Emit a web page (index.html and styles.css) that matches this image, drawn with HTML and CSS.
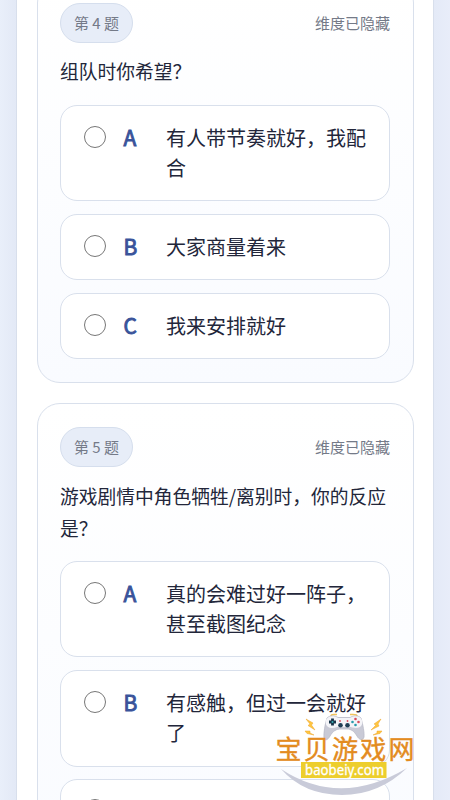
FILE: index.html
```html
<!DOCTYPE html>
<html lang="zh-CN">
<head>
<meta charset="utf-8">
<title>游戏测试</title>
<link rel="stylesheet" href="styles.css">
</head>
<body>
<main class="panel">
  <section class="card card-first">
    <header class="head"><span class="pill">第 4 题</span><span class="meta">维度已隐藏</span></header>
    <h2 class="title">组队时你希望？</h2>
    <div class="options">
      <label class="option"><input type="radio" name="q4" class="radio"><b class="key">A</b><span class="text">有人带节奏就好，我配合</span></label>
      <label class="option"><input type="radio" name="q4" class="radio"><b class="key">B</b><span class="text">大家商量着来</span></label>
      <label class="option"><input type="radio" name="q4" class="radio"><b class="key">C</b><span class="text">我来安排就好</span></label>
    </div>
  </section>
  <section class="card">
    <header class="head"><span class="pill">第 5 题</span><span class="meta">维度已隐藏</span></header>
    <h2 class="title title-long">游戏剧情中角色牺牲/离别时，你的反应是？</h2>
    <div class="options">
      <label class="option"><input type="radio" name="q5" class="radio"><b class="key">A</b><span class="text">真的会难过好一阵子，甚至截图纪念</span></label>
      <label class="option"><input type="radio" name="q5" class="radio"><b class="key">B</b><span class="text">有感触，但过一会就好了</span></label>
      <label class="option"><input type="radio" name="q5" class="radio radio-last"></label>
    </div>
  </section>
</main>
<svg class="mark" width="150" height="100" viewBox="270 700 150 100" role="img">
  <path d="M281 769Q340 808 407 768Q379 795 342 795Q304 795 281 769Z" fill="#c9cbd9"/>
  <path d="M331 716Q331 714.500 334 714.500H337M350 714.500H353Q357 714.500 357 716" fill="none" stroke="#f3c45a" stroke-width="1.5"/>
  <path d="M327 718C330 715 335 715.500 338 717.500H350C353 715.500 358 715 361 718C363 725 364.500 733 364 737C363 741 359 740 357 736C354 731 351 729 347 729H341C336 729 333 731 330 736C328 740 325 741 324 738C323.500 733 325 724 327 718Z" fill="#c9cad6" stroke="#b9bac8" stroke-width=".8"/>
  <path d="M328 717.500C331 715.500 335 716 338 718H350C353 716 357 715.500 360 717.500C363 720 363 725 360 727C357 728.500 353 728 351 727H337C334 728.500 330 728.500 327.500 726.500C325 724 325 720 328 717.500Z" fill="#f4f4f8"/>
  <path d="M332.500 718.500V725.500M329 722H336" stroke="#183449" stroke-width="2.800"/>
  <circle cx="332.500" cy="722" r="1" fill="#35aeb5"/>
  <g fill="#203e55"><circle cx="340.500" cy="725.300" r="2.300"/><circle cx="347.500" cy="725.300" r="2.300"/></g>
  <g fill="#d94c5c"><circle cx="355.500" cy="719" r="1.300"/><circle cx="358.500" cy="722" r="1.300"/><circle cx="340" cy="721" r=".9"/><circle cx="347.500" cy="721" r=".9"/></g>
  <g fill="#279cab"><circle cx="352.500" cy="722" r="1.300"/><circle cx="355.500" cy="725" r="1.300"/></g>
  <path d="M306 719L313 723L311.500 725L315 730L308 725.500L310 724ZM305 731L310 731L310 733L314 735L307 733.500ZM381 719L374 724L376 725L371 730L379 726L378 724ZM382 731L377 731L377 733L373 735L380 733.500Z" fill="#ffc63f" stroke="#eca52d" stroke-width=".5"/>
  <text class="brand" x="275.500" y="759" textLength="139" lengthAdjust="spacing">宝贝游戏网</text>
  <rect x="301" y="762" width="85.500" height="16" fill="#edce2d"/>
  <text class="domain" x="305" y="774.500" textLength="79" lengthAdjust="spacingAndGlyphs">baobeiy.com</text>
</svg>
</body>
</html>
```
FILE: styles.css
```css
* { box-sizing: border-box; }
html { height: 100%; overflow: hidden; }
body {
  margin: 0;
  height: 800px;
  overflow: hidden;
  padding: 0 16px;
  background: linear-gradient(90deg, #e9effa 0, #e3e9f6 16px, #e4eaf7 434px, #e8edf9 450px);
  color: #22263a;
  font-family: "Noto Sans CJK SC", sans-serif;
}
.panel {
  height: 800px;
  overflow: hidden;
  padding: 0 19.500px;
  background: #fff;
  border: solid #d8dfec;
  border-width: 0 1px;
}
.card {
  border: 1px solid #d9e0ec;
  border-radius: 23px;
  padding: 22.500px;
  background: linear-gradient(180deg, #fff, #f9fbff);
  margin-bottom: 20.500px;
}
.card-first { margin-top: -20.500px; }
.head { display: flex; justify-content: space-between; align-items: center; height: 40px; }
.pill {
  height: 40px;
  width: 73px;
  border: 1px solid #d5deed;
  border-radius: 20px;
  background: #e7edf8;
  text-align: center;
  line-height: 37px;
}
.pill, .meta { color: #747a88; font-size: 15px; }
.card-first .meta { padding-bottom: 1px; }
.title { margin: 12px 0 17.500px; font-size: 18.750px; line-height: 32px; font-weight: 400; }
.title-long { margin: 13.200px 0 16.800px; }
.options { display: grid; gap: 12.700px; }
.option {
  display: grid;
  grid-template-columns: 22px 26px 1fr;
  column-gap: 17px;
  align-items: start;
  min-height: 66.500px;
  padding: 17.250px 22px 17.250px 23px;
  border: 1px solid #d9e0ec;
  border-radius: 17px;
  background: #fff;
}
.radio {
  appearance: none;
  width: 22px;
  height: 22px;
  margin: 3px 0 0;
  border: 1.500px solid #777;
  border-radius: 50%;
  background: #fff;
}
.radio-last { margin-top: 2px; }
.key {
  font-size: 21px;
  line-height: 29px;
  font-weight: 400;
  color: #39539a;
  -webkit-text-stroke: .9px #39539a;
  padding-left: .5px;
}
.text { font-size: 20px; line-height: 30px; }
.mark { position: absolute; left: 270px; top: 700px; }
.brand { font-size: 26px; font-weight: 400; fill: #e38b20; stroke: #e38b20; stroke-width: .4px; }
.domain { font-size: 14px; font-family: "Noto Sans", sans-serif; fill: #fff; stroke: #fff; stroke-width: .3px; }
```
